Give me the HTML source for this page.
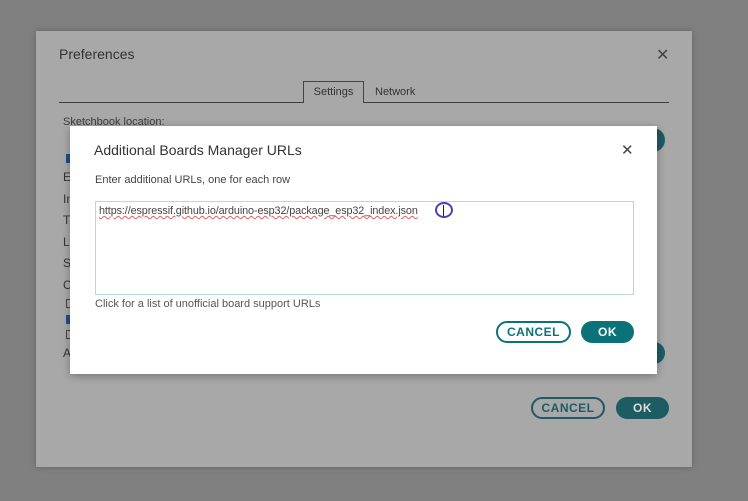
<!DOCTYPE html>
<html><head><style>
*{margin:0;padding:0;box-sizing:border-box}
body{width:748px;height:501px;background:#808080;position:relative;overflow:hidden;font-family:"Liberation Sans",sans-serif}
.a{position:absolute}
.pref{left:36px;top:31px;width:656px;height:436px;background:#a8a8a8;box-shadow:0 0 6px rgba(0,0,0,.25)}
.t{color:#3a3a3a;font-size:12px}
.btn{position:absolute;height:22px;border-radius:11px;font-size:12px;font-weight:bold;text-align:center;line-height:22px;letter-spacing:.5px}
.bo{line-height:18px}
.l{position:absolute;left:63px;font-size:12px;color:#333}
.cb{position:absolute;left:66px;width:9px;height:9px;border:1px solid #444}
</style></head><body>
<div class="a pref"></div>
<div class="a" style="left:59px;top:46px;font-size:14px;color:#333">Preferences</div>
<div class="a" style="left:656px;top:45px;font-size:16px;color:#444">✕</div>
<div class="a" style="left:59px;top:102px;width:610px;height:1px;background:#3d3d3d"></div>
<div class="a" style="left:303px;top:81px;width:61px;height:22px;border:1px solid #444;border-bottom:none;background:#a8a8a8;font-size:11px;color:#333;text-align:center;line-height:21px">Settings</div>
<div class="a" style="left:375px;top:86px;font-size:11px;color:#333">Network</div>
<div class="a t" style="left:63px;top:116px;font-size:11px">Sketchbook location:</div>
<div class="l" style="top:170px">E</div><div class="l" style="top:192px">In</div><div class="l" style="top:213px">Th</div>
<div class="l" style="top:235px">La</div><div class="l" style="top:256px">Sl</div><div class="l" style="top:278px">C</div>
<div class="l" style="top:346px">A</div>
<div class="cb" style="top:154px;background:#1d4f8a;border-color:#1d4f8a"></div>
<div class="cb" style="top:299px"></div>
<div class="cb" style="top:315px;background:#1d4f8a;border-color:#1d4f8a"></div>
<div class="cb" style="top:330px"></div>
<div class="a" style="left:640px;top:128px;width:25px;height:24px;border-radius:12px;background:#1d5c62"></div>
<div class="a" style="left:640px;top:342px;width:25px;height:22px;border-radius:11px;background:#1d5c62"></div>
<div class="btn bo" style="left:531px;top:397px;width:74px;border:2px solid #1d5c62;color:#1d5c62">CANCEL</div>
<div class="btn" style="left:616px;top:397px;width:53px;background:#1d5c62;color:#ddd">OK</div>
<div class="a" style="left:70px;top:126px;width:587px;height:248px;background:#fff;box-shadow:0 2px 8px rgba(0,0,0,.3)"></div>
<div class="a" style="left:94px;top:142px;font-size:14px;color:#333">Additional Boards Manager URLs</div>
<div class="a" style="left:621px;top:141px;font-size:15px;color:#444">✕</div>
<div class="a" style="left:95px;top:174px;font-size:11px;color:#444">Enter additional URLs, one for each row</div>
<div class="a" style="left:95px;top:201px;width:539px;height:94px;border:1px solid #b8d8d6;background:#fff"></div>
<div class="a" style="left:99px;top:205px;font-size:10.8px;letter-spacing:-0.1px;color:#444;text-decoration:underline wavy #e06060;text-decoration-thickness:1px">https://espressif.github.io/arduino-esp32/package_esp32_index.json</div>
<div class="a" style="left:435px;top:202px;width:18px;height:16px;border:2px solid #4b3fb5;border-radius:50%"></div>
<div class="a" style="left:443px;top:205px;width:1px;height:11px;background:#222"></div>
<div class="a" style="left:95px;top:298px;font-size:11px;color:#555">Click for a list of unofficial board support URLs</div>
<div class="btn bo" style="left:496px;top:321px;width:75px;border:2px solid #0c7279;color:#0c7279">CANCEL</div>
<div class="btn" style="left:581px;top:321px;width:53px;background:#0c7279;color:#fff">OK</div>
</body></html>
